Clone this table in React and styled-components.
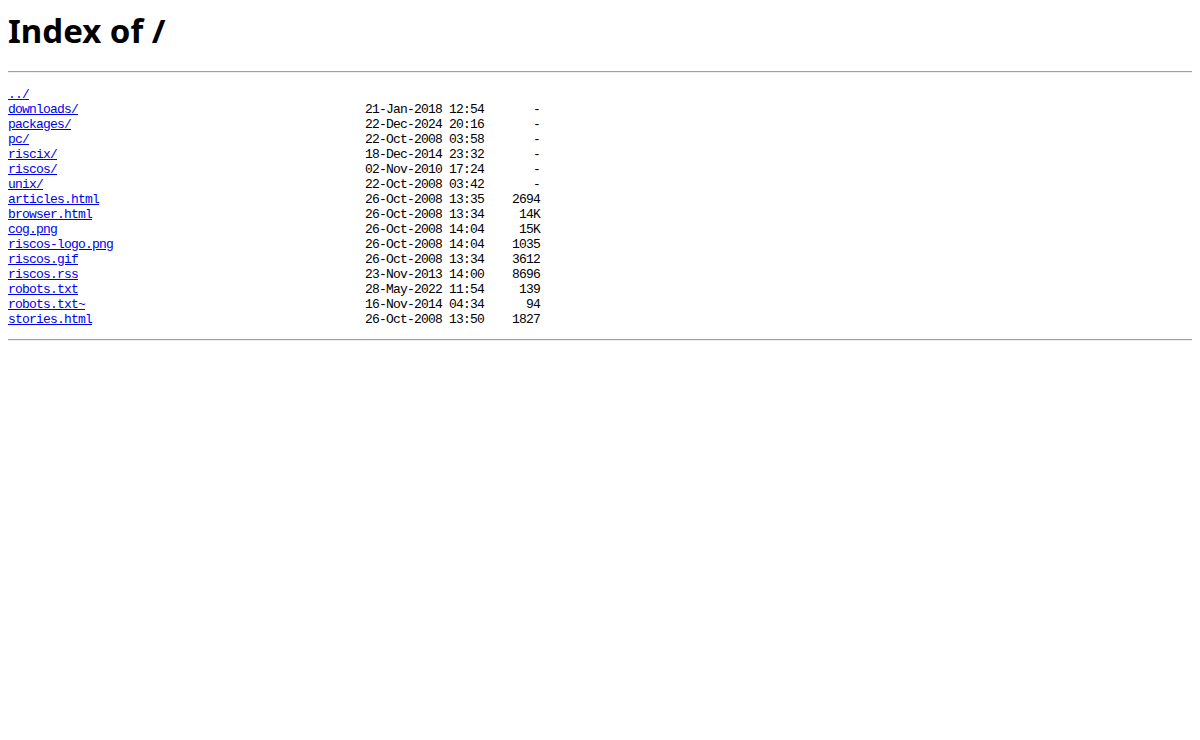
import React from 'react'
import styled, { createGlobalStyle } from 'styled-components'

const entries = [
    { name: '../', date: '', size: '' },
    { name: 'downloads/', date: '21-Jan-2018 12:54', size: '-' },
    { name: 'packages/', date: '22-Dec-2024 20:16', size: '-' },
    { name: 'pc/', date: '22-Oct-2008 03:58', size: '-' },
    { name: 'riscix/', date: '18-Dec-2014 23:32', size: '-' },
    { name: 'riscos/', date: '02-Nov-2010 17:24', size: '-' },
    { name: 'unix/', date: '22-Oct-2008 03:42', size: '-' },
    { name: 'articles.html', date: '26-Oct-2008 13:35', size: '2694' },
    { name: 'browser.html', date: '26-Oct-2008 13:34', size: '14K' },
    { name: 'cog.png', date: '26-Oct-2008 14:04', size: '15K' },
    { name: 'riscos-logo.png', date: '26-Oct-2008 14:04', size: '1035' },
    { name: 'riscos.gif', date: '26-Oct-2008 13:34', size: '3612' },
    { name: 'riscos.rss', date: '23-Nov-2013 14:00', size: '8696' },
    { name: 'robots.txt', date: '28-May-2022 11:54', size: '139' },
    { name: 'robots.txt~', date: '16-Nov-2014 04:34', size: '94' },
    { name: 'stories.html', date: '26-Oct-2008 13:50', size: '1827' },
]

const App = () => {
    return (
        <>
            <GlobalStyle />
            <Page>
                <Title>Index of /</Title>
                <Rule />
                <Listing>
                    {entries.map((e) => (
                        <Row key={e.name}>
                            <NameCell>
                                <FileLink href={e.name}>{e.name}</FileLink>
                            </NameCell>
                            <DateCell>{e.date}</DateCell>
                            <SizeCell>{e.size}</SizeCell>
                        </Row>
                    ))}
                </Listing>
                <Rule $bottom />
            </Page>
        </>
    )
}

export default App;

const GlobalStyle = createGlobalStyle`
body {
    margin: 0;
    background: #fff;
}
`;
const Page = styled.div`
padding: 0 8px;
display: flex;
flex-direction: column;
`;
const Title = styled.h1`
margin: 11px 0 0;
font-family: "Noto Sans", sans-serif;
font-weight: bold;
font-size: 33px;
line-height: 39px;
color: #000;
`;
const Rule = styled.hr`
margin: ${p => (p.$bottom ? '12px 0 0' : '21px 0 0')};
border: 0;
border-top: 1px solid #a0a0a0;
border-bottom: 1px solid #eeeeee;
height: 0;
width: 100%;
`;
const Listing = styled.div`
margin-top: 14px;
display: flex;
flex-direction: column;
font-family: "Liberation Mono", monospace;
font-size: 13px;
letter-spacing: -0.8px;
line-height: 15px;
color: #000;
`;
const Row = styled.div`
display: flex;
height: 15px;
white-space: pre;
`;
const NameCell = styled.div`
width: 357px;
`;
const FileLink = styled.a`
color: #0000ee;
text-decoration: underline;
`;
const DateCell = styled.div`
width: 119px;
`;
const SizeCell = styled.div`
width: 56px;
text-align: right;
`;
